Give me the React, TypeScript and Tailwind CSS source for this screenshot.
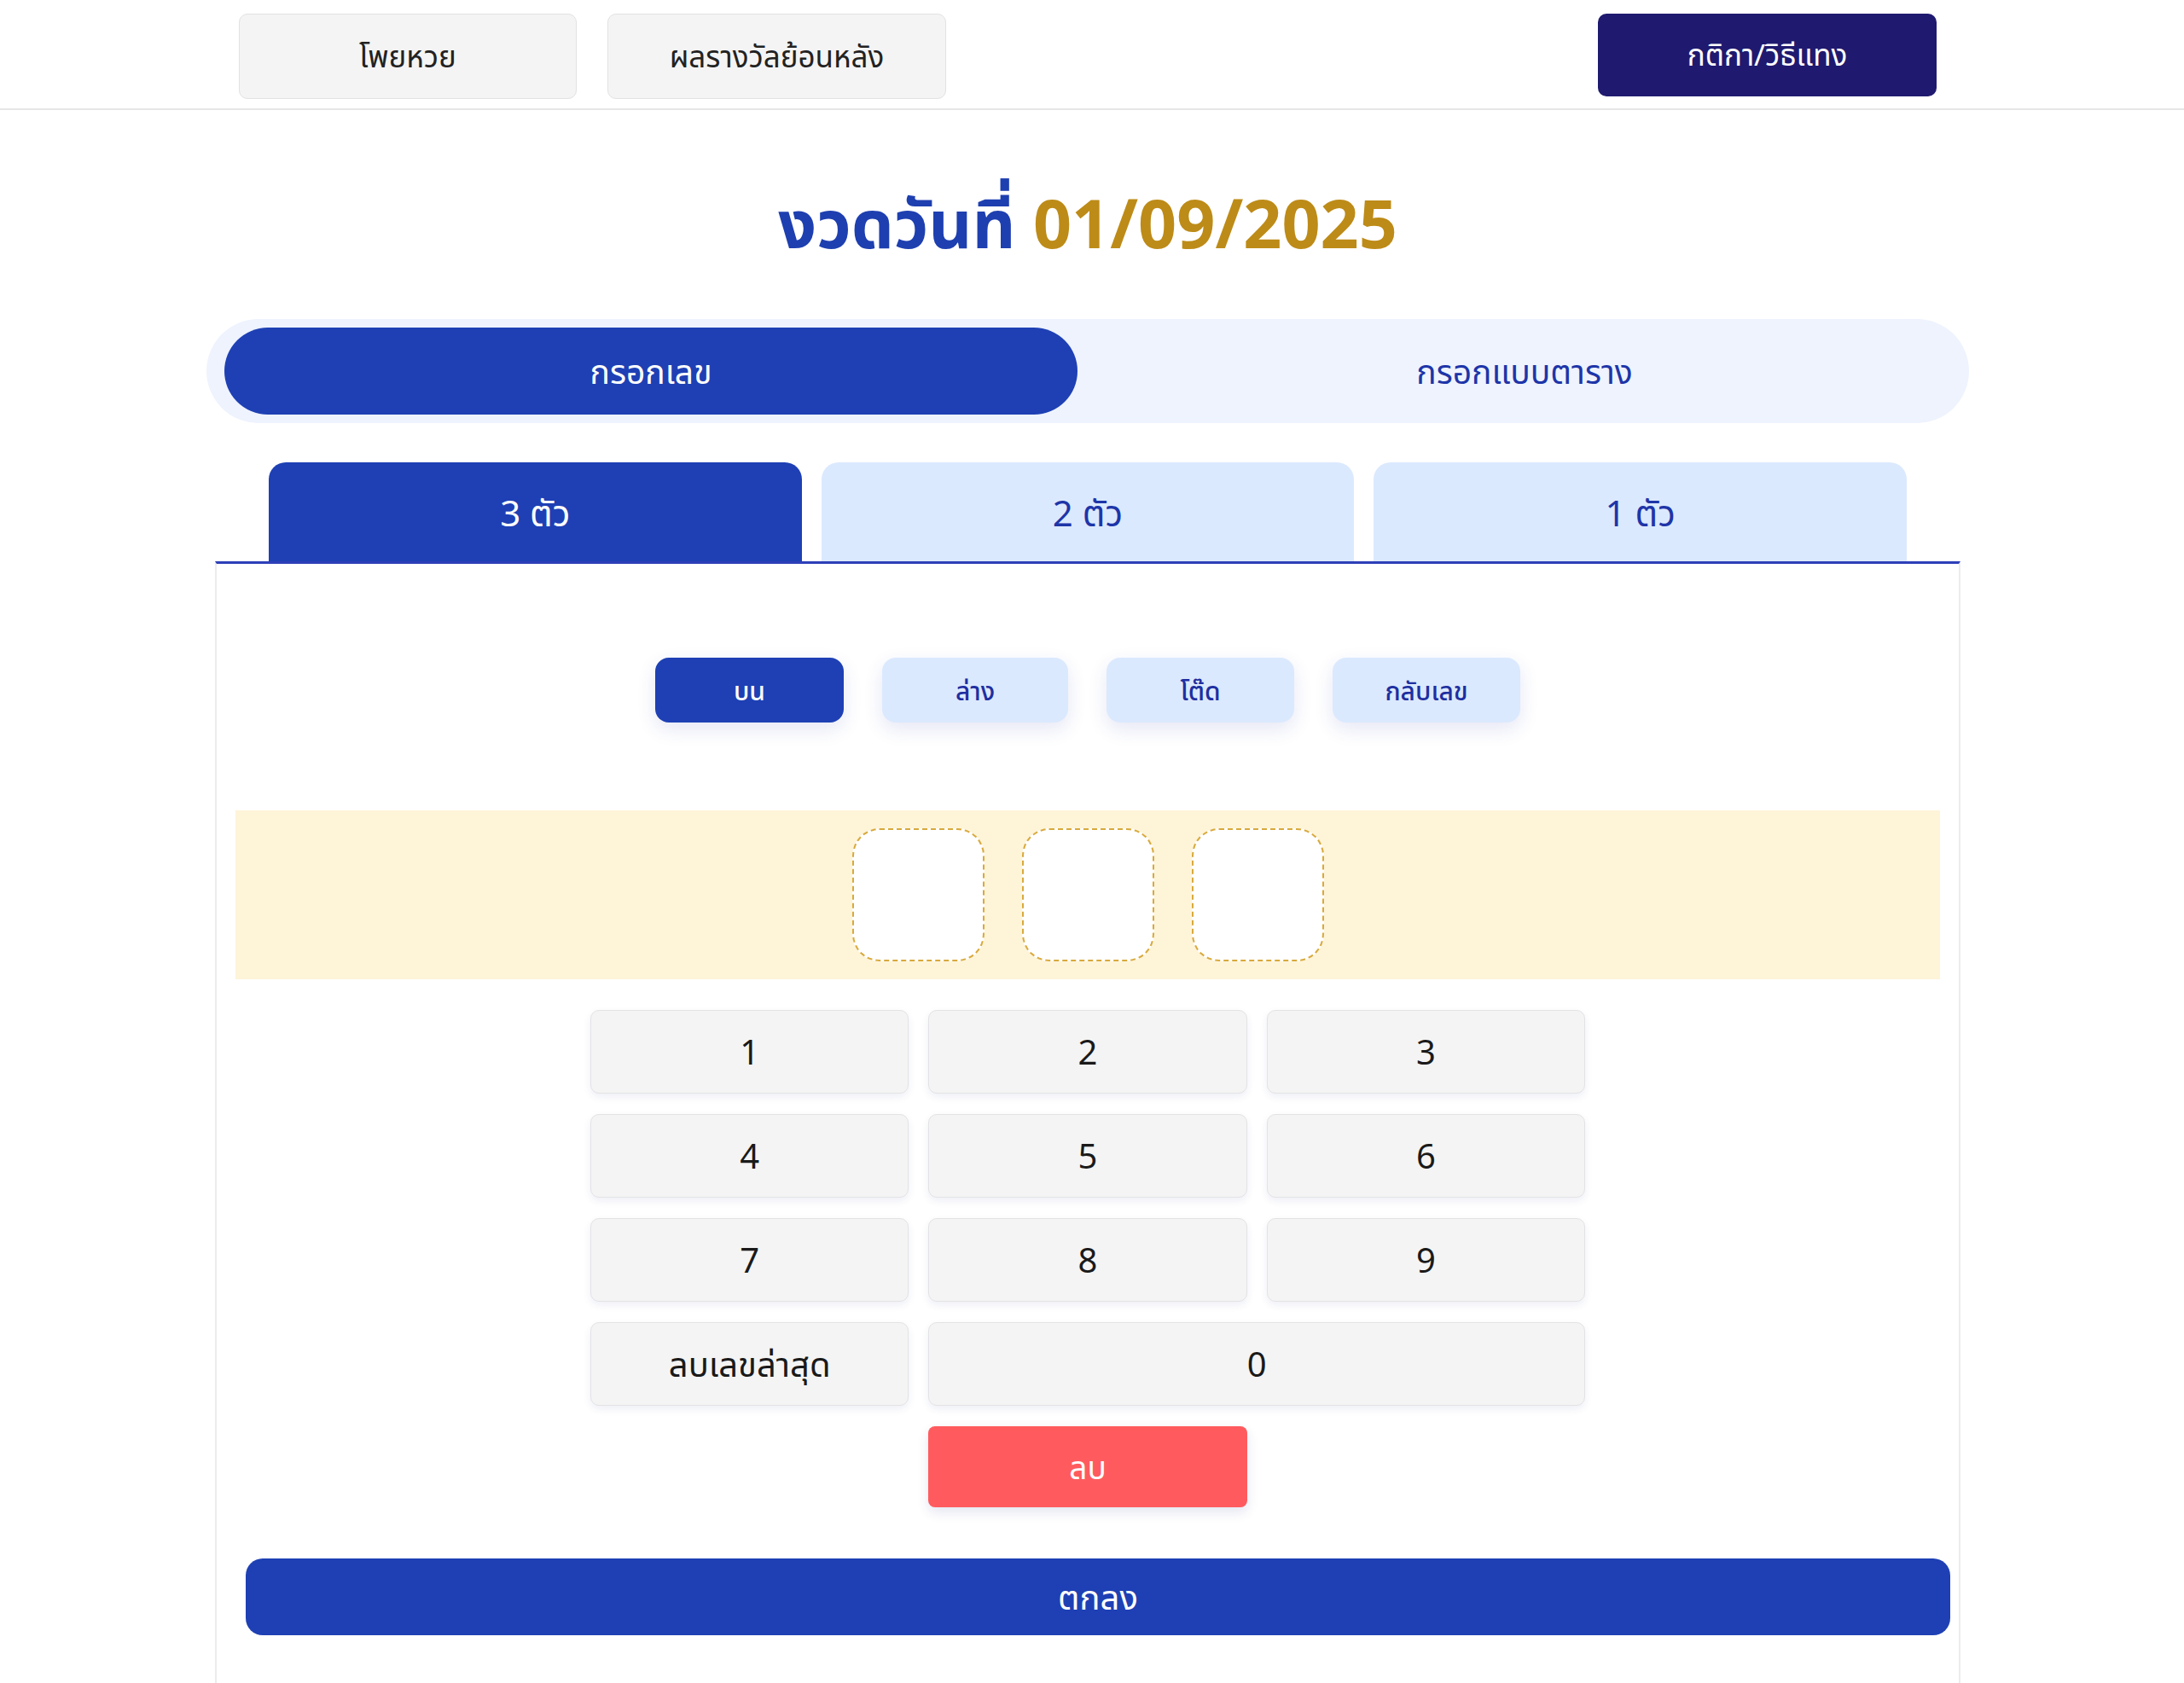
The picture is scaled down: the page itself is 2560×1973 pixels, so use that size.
import React from "react";

const FONT = "font-['Noto_Sans','Noto_Sans_Thai','Noto_Sans_CJK_SC',sans-serif]";

export default function App() {
  const keys = ["1", "2", "3", "4", "5", "6", "7", "8", "9"];
  return (
    <div className={`min-h-screen bg-white ${FONT}`}>
      {/* Header */}
      <div className="border-b-2 border-[#e6e6e6] pt-[16px] pb-[11px]">
        <div className="w-[2550px]">
          <div className="w-[1990px] mx-auto flex justify-between items-start">
            <div className="flex gap-[36px]">
              <button className="w-[396px] h-[100px] bg-[#f4f4f4] border border-[#e2e2e2] rounded-[10px] text-[35px] text-[#222] flex items-center justify-center">
                โพยหวย
              </button>
              <button className="w-[397px] h-[100px] bg-[#f4f4f4] border border-[#e2e2e2] rounded-[10px] text-[35px] text-[#222] flex items-center justify-center">
                ผลรางวัลย้อนหลัง
              </button>
            </div>
            <button className="w-[397px] h-[97px] bg-[#1f1a6f] rounded-[10px] text-[35px] text-white flex items-center justify-center">
              กติกา/วิธีแทง
            </button>
          </div>
        </div>
      </div>

      <div className="w-[2550px]">
        {/* Title */}
        <h1 className="mt-[84px] text-center text-[79px] leading-[96px] font-bold">
          <span className="text-[#1e3fb0]">งวดวันที่ </span>
          <span className="text-[#bd8b17]">01/09/2025</span>
        </h1>

        {/* Mode toggle */}
        <div className="mt-[65px] w-[2066px] mx-auto h-[122px] rounded-full bg-[#eef3fe] flex justify-between px-[21px] py-[10px]">
          <button className="w-[1000px] rounded-full bg-[#1e40b4] text-white text-[39px] flex items-center justify-center">
            กรอกเลข
          </button>
          <button className="w-[1000px] rounded-full text-[#1e35a8] text-[39px] flex items-center justify-center">
            กรอกแบบตาราง
          </button>
        </div>

        {/* Tabs */}
        <div className="mt-[46px] w-[2044px] mx-auto px-[62px] flex gap-[23px]">
          <button className="flex-1 h-[116px] rounded-t-[20px] bg-[#1e40b4] text-white text-[42px] flex items-center justify-center">
            3 ตัว
          </button>
          <button className="flex-1 h-[116px] rounded-t-[20px] bg-[#dbe9fe] text-[#1e35a8] text-[42px] flex items-center justify-center">
            2 ตัว
          </button>
          <button className="flex-1 h-[116px] rounded-t-[20px] bg-[#dbe9fe] text-[#1e35a8] text-[42px] flex items-center justify-center">
            1 ตัว
          </button>
        </div>

        {/* Card */}
        <div className="w-[2046px] mx-auto border-t-[3px] border-t-[#2d3fb8] border-x-2 border-x-[#ececf0] bg-white pb-[60px]">
          {/* Sub buttons */}
          <div className="pt-[110px] flex justify-center gap-[45px]">
            <button className="w-[221px] h-[76px] rounded-[16px] bg-[#1e40b4] text-white text-[30px] font-medium shadow-[0_8px_22px_rgba(40,60,170,0.12)] flex items-center justify-center">
              บน
            </button>
            <button className="w-[218px] h-[76px] rounded-[16px] bg-[#dbe9fe] text-[#1e2fa0] text-[30px] font-medium shadow-[0_8px_22px_rgba(40,60,170,0.12)] flex items-center justify-center">
              ล่าง
            </button>
            <button className="w-[220px] h-[76px] rounded-[16px] bg-[#dbe9fe] text-[#1e2fa0] text-[30px] font-medium shadow-[0_8px_22px_rgba(40,60,170,0.12)] flex items-center justify-center">
              โต๊ด
            </button>
            <button className="w-[220px] h-[76px] rounded-[16px] bg-[#dbe9fe] text-[#1e2fa0] text-[30px] font-medium shadow-[0_8px_22px_rgba(40,60,170,0.12)] flex items-center justify-center">
              กลับเลข
            </button>
          </div>

          {/* Digit slots */}
          <div className="mt-[103px] mx-[22px] h-[198px] bg-[#fef4d8] flex items-center justify-center gap-[44px]">
            {[0, 1, 2].map((i) => (
              <div
                key={i}
                className="w-[155px] h-[156px] rounded-[32px] border-2 border-dashed border-[#d8a93c] bg-white"
              />
            ))}
          </div>

          {/* Keypad */}
          <div className="mt-[36px] w-[1166px] mx-auto grid grid-cols-3 gap-x-[23px] gap-y-[24px]">
            {keys.map((k) => (
              <button
                key={k}
                className="h-[98px] bg-[#f4f4f4] border border-[#e3e3e6] rounded-[10px] shadow-[0_4px_10px_rgba(40,50,140,0.08)] text-[40px] text-[#1a1a1a] flex items-center justify-center"
              >
                {k}
              </button>
            ))}
            <button className="h-[98px] bg-[#f4f4f4] border border-[#e3e3e6] rounded-[10px] shadow-[0_4px_10px_rgba(40,50,140,0.08)] text-[40px] text-[#1a1a1a] flex items-center justify-center">
              ลบเลขล่าสุด
            </button>
            <button className="col-span-2 h-[98px] bg-[#f4f4f4] border border-[#e3e3e6] rounded-[10px] shadow-[0_4px_10px_rgba(40,50,140,0.08)] text-[40px] text-[#1a1a1a] flex items-center justify-center">
              0
            </button>
            <button className="col-start-2 h-[95px] bg-[#ff5b5e] rounded-[8px] shadow-[0_6px_14px_rgba(40,50,140,0.12)] text-[37px] text-white flex items-center justify-center">
              ลบ
            </button>
          </div>

          {/* Submit */}
          <div className="mt-[60px] ml-[34px] mr-[10px]">
            <button className="w-full h-[90px] rounded-[20px] bg-[#1e40b4] text-white text-[40px] flex items-center justify-center">
              ตกลง
            </button>
          </div>
        </div>
      </div>
    </div>
  );
}
